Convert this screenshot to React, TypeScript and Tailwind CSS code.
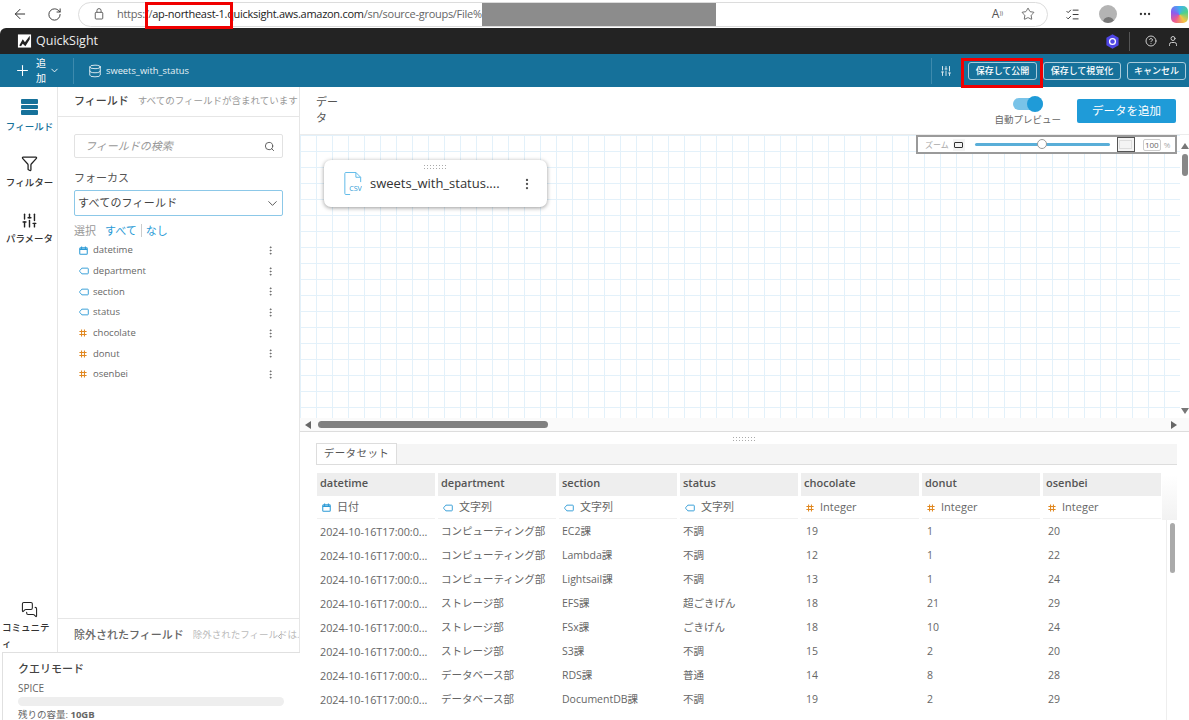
import { ArrowLeft, RotateCw, Plus, ChevronDown, ChevronLeft, Search, EllipsisVertical, SlidersVertical, CircleHelp, User, Ellipsis, Star, ListChecks, Filter, MessagesSquare, Database } from "lucide-react";

const JP = "font-['Open_Sans','Noto_Sans_CJK_JP',sans-serif]";

function CalIcon({ className = "" }: { className?: string }) {
  return (
    <svg viewBox="0 0 12 12" className={"w-[9px] h-[9px] text-[#2e9bd6] " + className} fill="none" stroke="currentColor" strokeWidth="1.4">
      <rect x="1" y="2.5" width="10" height="8.5" rx="1" />
      <path d="M3.5 0.5v3M8.5 0.5v3M1 4.5h10" />
    </svg>
  );
}
function TagIcon({ className = "" }: { className?: string }) {
  return (
    <svg viewBox="0 0 14 10" className={"w-[10px] h-[8px] text-[#2e9bd6] " + className} fill="none" stroke="currentColor" strokeWidth="1.3">
      <path d="M4 1h8a1 1 0 0 1 1 1v6a1 1 0 0 1-1 1H4L1 5.5V4.5z" />
    </svg>
  );
}
function HashIcon({ className = "" }: { className?: string }) {
  return (
    <svg viewBox="0 0 10 10" className={"w-[8px] h-[8px] text-[#e0871f] " + className} fill="none" stroke="currentColor" strokeWidth="1.3">
      <path d="M3.2 0.5v9M6.8 0.5v9M0.5 3.2h9M0.5 6.8h9" />
    </svg>
  );
}
function TypeIcon({ t }: { t: string }) {
  if (t === "date") return <CalIcon />;
  if (t === "str") return <TagIcon />;
  return <HashIcon />;
}

const fields: [string, string][] = [
  ["date", "datetime"],
  ["str", "department"],
  ["str", "section"],
  ["str", "status"],
  ["num", "chocolate"],
  ["num", "donut"],
  ["num", "osenbei"],
];

const headers: [string, string, string][] = [
  ["datetime", "date", "日付"],
  ["department", "str", "文字列"],
  ["section", "str", "文字列"],
  ["status", "str", "文字列"],
  ["chocolate", "num", "Integer"],
  ["donut", "num", "Integer"],
  ["osenbei", "num", "Integer"],
];

const rows: string[][] = [
  ["コンピューティング部", "EC2課", "不調", "19", "1", "20"],
  ["コンピューティング部", "Lambda課", "不調", "12", "1", "22"],
  ["コンピューティング部", "Lightsail課", "不調", "13", "1", "24"],
  ["ストレージ部", "EFS課", "超ごきげん", "18", "21", "29"],
  ["ストレージ部", "FSx課", "ごきげん", "18", "10", "24"],
  ["ストレージ部", "S3課", "不調", "15", "2", "20"],
  ["データベース部", "RDS課", "普通", "14", "8", "28"],
  ["データベース部", "DocumentDB課", "不調", "19", "2", "29"],
];

function Browser() {
  return (
    <div className="h-[28px] bg-white flex items-center shrink-0 text-[#555]">
      <div className="w-[40px] flex justify-center"><ArrowLeft size={16} strokeWidth={1.5} className="text-[#333]" /></div>
      <div className="w-[32px] flex justify-center"><RotateCw size={15} strokeWidth={1.5} className="text-[#333] ml-[-4px]" /></div>
      <div className="w-[970px] h-[25px] ml-[6px] border border-[#dcdcdc] rounded-full flex items-center relative overflow-hidden">
        <svg viewBox="0 0 12 14" className="w-[10px] h-[12px] ml-[15px] text-[#555]" fill="none" stroke="currentColor" strokeWidth="1.1"><rect x="1.5" y="5" width="9" height="8" rx="1" /><path d="M3.5 5V3a2.500 2.500 0 0 1 5 0v2" /></svg>
        <span className="ml-[13px] text-[11px] text-[#666] font-['Open_Sans',sans-serif] whitespace-nowrap tracking-[-0.28px]">
          https://<span className="text-[#222]">ap-northeast-1.quicksight.aws.amazon.com</span>/sn/source-groups/File%
        </span>
        <div className="w-[234px] h-[23px] bg-[#8c8c8c]" />
        <div className="ml-auto mr-[12px] flex items-center gap-[18px]">
          <span className="text-[12px] text-[#555] font-['Open_Sans',sans-serif]">A<sup className="text-[6px]">))</sup></span>
          <Star size={14} strokeWidth={1.3} className="text-[#444]" />
        </div>
      </div>
      <ListChecks size={15} strokeWidth={1.4} className="ml-[17px] text-[#222]" />
      <div className="w-[18px] h-[18px] rounded-full bg-[#b4b4b4] ml-[19px] flex items-end justify-center overflow-hidden"><div className="w-[11px] h-[6px] rounded-t-full bg-[#777]" /></div>
      <Ellipsis size={14} className="ml-[21px] text-[#333]" />
      <div className="w-[17px] h-[17px] ml-[19px] rounded-[5px] bg-[conic-gradient(#3fb0f0,#4fd18b,#f5c542,#ee5a8f,#8a5cf0,#3fb0f0)]" />
    </div>
  );
}

function TopBars() {
  return (
    <>
      <div className="h-[26px] bg-[#232323] rounded-tl-[6px] flex items-center text-white shrink-0">
        <svg viewBox="0 0 16 16" className="w-[15px] h-[14px] ml-[17px] mr-[4px]"><rect x="0.5" y="0.5" width="15" height="15" fill="#fff" /><path d="M2 13l4-7 2.500 3.500L14 2v4l-5 8-3-3-2 3z" fill="#232323" /></svg>
        <span className={"text-[12.5px] text-[#eee] " + JP}>QuickSight</span>
        <div className="ml-auto flex items-center">
          <svg viewBox="0 0 16 18" className="w-[13px] h-[15px]"><path d="M8 0l7.500 4.500v9L8 18 .5 13.500v-9z" fill="#4f46e5" /><circle cx="8" cy="9" r="3.600" fill="none" stroke="#fff" strokeWidth="1.600" /></svg>
          <div className="w-px h-[19px] bg-[#555] ml-[10px] mr-[15px]" />
          <CircleHelp size={12} className="text-[#ccc]" />
          <User size={12} className="text-[#ccc] ml-[10px] mr-[10px]" />
        </div>
      </div>
      <div className={"h-[33px] bg-[#16719a] flex items-center text-white shrink-0 " + JP}>
        <Plus size={17} strokeWidth={1.5} className="ml-[14px]" />
        <div className="w-[12px] ml-[4px] text-[10px] leading-[15px] text-center">追加</div>
        <ChevronDown size={11} className="ml-[2px]" />
        <div className="w-px h-[26px] bg-[#3d8aad] ml-[13px]" />
        <Database size={14} strokeWidth={1.4} className="ml-[14px]" />
        <span className="ml-[4px] text-[9.300px] font-medium text-[#e8f2f6]">sweets_with_status</span>
        <div className="ml-auto flex items-center">
          <div className="w-px h-[26px] bg-[#3d8aad]" />
          <SlidersVertical size={12} className="ml-[8px] text-[#d5e5ec]" />
          <button className="ml-[16px] h-[18px] w-[69px] border border-[#a9cbdb] rounded-[3px] text-[9px] font-medium">保存して公開</button>
          <button className="ml-[6px] h-[18px] w-[78px] border border-[#a9cbdb] rounded-[3px] text-[9px] font-medium">保存して視覚化</button>
          <button className="ml-[6px] mr-[3px] h-[18px] w-[59px] border border-[#a9cbdb] rounded-[3px] text-[9px] font-medium">キャンセル</button>
        </div>
      </div>
    </>
  );
}

function Rail() {
  return (
    <div className={"w-[58px] shrink-0 pl-[2px] flex flex-col items-center border-r border-[#e6e6e6] " + JP}>
      <div className="mt-[12px] flex flex-col gap-[1px]">
        <div className="w-[17px] h-[4.500px] bg-[#16719a] rounded-[1px]" />
        <div className="w-[17px] h-[4.500px] bg-[#16719a] rounded-[1px]" />
        <div className="w-[17px] h-[4.500px] bg-[#16719a] rounded-[1px]" />
      </div>
      <div className="mt-[5px] text-[9.500px] font-medium text-[#16719a] leading-[14px] whitespace-nowrap">フィールド</div>
      <Filter size={17} strokeWidth={1.8} className="mt-[21px] text-[#222]" />
      <div className="mt-[4px] text-[9.500px] font-medium text-[#333] leading-[14px] whitespace-nowrap">フィルター</div>
      <SlidersVertical size={17} strokeWidth={2} className="mt-[22px] text-[#222]" />
      <div className="mt-[3px] text-[9.500px] font-medium text-[#333] leading-[14px] whitespace-nowrap">パラメータ</div>
      <MessagesSquare size={17} strokeWidth={1.5} className="mt-auto text-[#222]" />
      <div className="mt-[2px] mb-[0px] ml-[-5px] w-[50px] text-[9.500px] font-medium text-[#333] leading-[16px]">コミュニティ</div>
    </div>
  );
}

function FieldPanel() {
  return (
    <div className={"w-[242px] shrink-0 flex flex-col border-r border-[#e6e6e6] " + JP}>
      <div className="h-[30px] shrink-0 border-b border-[#e6e6e6] pl-[16px] flex items-center whitespace-nowrap overflow-hidden">
        <span className="text-[11px] font-medium text-[#444]">フィールド</span>
        <span className="ml-[9px] text-[9.500px] text-[#999]">すべてのフィールドが含まれています</span>
      </div>
      <div className="flex-1 px-[16px] min-h-0">
        <div className="mt-[17px] h-[24px] border border-[#e2e2e2] rounded-[2px] flex items-center pl-[10px] pr-[7px]">
          <span className="text-[11px] italic text-[#999]">フィールドの検索</span>
          <Search size={11} className="ml-auto text-[#555]" />
        </div>
        <div className="mt-[12px] text-[11px] text-[#555] leading-[15px]">フォーカス</div>
        <div className="mt-[5px] h-[26px] border border-[#8cc8e8] rounded-[2px] flex items-center pl-[3px] pr-[2px]">
          <span className="text-[11px] tracking-[0.2px] text-[#444]">すべてのフィールド</span>
          <ChevronDown size={15} strokeWidth={1.4} className="ml-auto text-[#444]" />
        </div>
        <div className="mt-[7px] text-[11px] leading-[15px] flex items-center">
          <span className="text-[#999]">選択</span>
          <span className="ml-[9px] text-[#2a9ad6]">すべて</span>
          <span className="mx-[4px] w-px h-[13px] bg-[#ccc]" />
          <span className="text-[#2a9ad6]">なし</span>
        </div>
        <div className="mt-[2px]">
          {fields.map(([t, n]) => (
            <div key={n} className="h-[20.700px] flex items-center pl-[5px]">
              <span className="w-[14px] flex items-center"><TypeIcon t={t} /></span>
              <span className="text-[9.500px] text-[#666]">{n}</span>
              <EllipsisVertical size={11} className="ml-auto mr-[7px] text-[#666]" />
            </div>
          ))}
        </div>
      </div>
      <div className="relative h-[34px] shrink-0 border-t border-[#e6e6e6] pl-[16px] flex items-center whitespace-nowrap overflow-hidden">
        <span className="text-[11px] font-medium text-[#666]">除外されたフィールド</span>
        <span className="ml-[9px] text-[9.500px] text-[#bbb]">除外されたフィールドは.</span>
        <ChevronLeft size={9} className="absolute left-[217px] top-[13px] text-[#888]" />
      </div>
    </div>
  );
}

function Canvas() {
  return (
    <div className={"flex-1 min-h-0 flex flex-col " + JP}>
      <div className="h-[48px] shrink-0 flex items-start border-b border-[#ececec]">
        <div className="ml-[16px] mt-[7px] w-[24px] text-[11px] leading-[16px] text-[#555]">データ</div>
        <div className="ml-auto mt-[9px] flex flex-col items-center">
          <div className="relative w-[30px] h-[12px] rounded-full bg-[#79c3e8] mt-[2px]">
            <div className="absolute right-0 top-[-2px] w-[16px] h-[16px] rounded-full bg-[#1f9bd8]" />
          </div>
          <span className="mt-[3px] text-[9.500px] text-[#666] leading-[14px]">自動プレビュー</span>
        </div>
        <button className="ml-[16px] mr-[13px] mt-[12px] w-[99px] h-[24px] rounded-[2px] bg-[#1f9bd8] text-white text-[11.500px]">データを追加</button>
      </div>
      <div className="relative flex-1 min-h-0 bg-white bg-[linear-gradient(to_right,#e3f1fa_1px,transparent_1px),linear-gradient(to_bottom,#e3f1fa_1px,transparent_1px)] bg-[size:16px_16px]">
        <div className="absolute left-[24px] top-[25px] w-[223px] h-[47px] bg-white rounded-[7px] shadow-[0_1px_4px_rgba(0,0,0,0.4)] flex items-center">
          <div className="absolute top-[4px] left-[99px] w-[25px] h-[5px] bg-[radial-gradient(#aaa_1px,transparent_1px)] bg-[size:3px_3px]" />
          <svg viewBox="0 0 18 24" className="ml-[20px] w-[18px] h-[23px]" fill="none" stroke="#5bb8e8" strokeWidth="1"><path d="M12 .5H1.500a1 1 0 0 0-1 1v21a1 1 0 0 0 1 1H6M12 .5l5 5M12 .5v5h5v5" /><text x="5" y="20" fontSize="7.500" fill="#2e9bd6" stroke="none" fontFamily="Open Sans">CSV</text></svg>
          <span className="ml-[8px] text-[13px] text-[#333] whitespace-nowrap">sweets_with_status....</span>
          <EllipsisVertical size={14} className="ml-auto mr-[13px] text-[#555]" />
        </div>
        <div className="absolute right-[12px] top-[0px] w-[261px] h-[19px] bg-white border-2 border-[#9a9a9a] flex items-center">
          <span className="ml-[7px] text-[8px] text-[#aaa]">ズーム</span>
          <div className="ml-[4px] w-[12px] h-[12px] bg-[#f4f4f4] flex items-center justify-center"><div className="w-[9px] h-[6px] border border-[#333] rounded-[1px]" /></div>
          <div className="relative ml-[10px] w-[135px] h-[3px] rounded bg-[#59aed8]">
            <div className="absolute left-[62px] top-[-4px] w-[10px] h-[10px] rounded-full bg-white border border-[#999]" />
          </div>
          <div className="ml-[7px] w-[18px] h-[15px] border border-[#555] bg-[#f4f4f4] flex items-center justify-center"><div className="w-[13px] h-[9px] border border-[#ddd]" /></div>
          <div className="ml-[8px] w-[18px] h-[12px] border border-[#ccc] rounded-[2px] text-[8px] leading-[10px] text-center text-[#666]">100</div>
          <span className="ml-[3px] text-[8px] text-[#aaa]">%</span>
        </div>
        <div className="absolute right-0 top-0 bottom-0 w-[9px] bg-white flex flex-col items-center">
          <div className="mt-[8px] w-0 h-0 border-x-[4px] border-x-transparent border-b-[6px] border-b-[#777]" />
          <div className="mt-[5px] w-[6px] h-[22px] rounded bg-[#888]" />
          <div className="mt-auto mb-[17px] w-0 h-0 border-x-[4px] border-x-transparent border-t-[6px] border-t-[#777]" />
        </div>
        <div className="absolute left-0 right-0 bottom-0 h-[13px] bg-[#fafafa] flex items-center">
          <div className="ml-[5px] w-0 h-0 border-y-[4px] border-y-transparent border-r-[6px] border-r-[#666]" />
          <div className="ml-[7px] w-[230px] h-[7px] rounded bg-[#808080]" />
          <div className="ml-auto mr-[12px] w-0 h-0 border-y-[4px] border-y-transparent border-l-[6px] border-l-[#666]" />
        </div>
      </div>
    </div>
  );
}

function Preview() {
  return (
    <div className={"h-[289px] shrink-0 border-t border-[#ddd] flex flex-col overflow-hidden relative " + JP}>
      <div className="h-[12px] flex justify-center items-center">
        <div className="w-[25px] h-[5px] bg-[radial-gradient(#aaa_1px,transparent_1px)] bg-[size:3px_3px]" />
      </div>
      <div className="ml-[16px] mr-[12px] h-[21px] bg-[#f5f5f5] border-b border-[#ddd] flex items-end shrink-0">
        <div className="h-[21px] w-[81px] bg-white border border-b-0 border-[#ddd] text-[10.500px] text-[#555] flex items-center justify-center tracking-[0.4px]">データセット</div>
      </div>
      <div className="ml-[17px] mt-[8px] grid grid-cols-[repeat(7,118px)] gap-x-[3px] text-[10.500px]">
        {headers.map(([n]) => (
          <div key={n} className="h-[23px] bg-[#eeeeee] pl-[3px] pb-[2px] flex items-center text-[11px] font-semibold text-[#555]">{n}</div>
        ))}
        {headers.map(([n, t, l]) => (
          <div key={n} className="h-[22px] mt-[1px] mb-[1px] border-b border-[#f0f0f0] pl-[5px] flex items-center text-[11px] text-[#666]">
            <TypeIcon t={t} />
            <span className="ml-[6px]">{l}</span>
          </div>
        ))}
        {rows.map((r, i) =>
          ["2024-10-16T17:00:0...", ...r].map((c, j) => (
            <div key={i + "-" + j} className={"h-[24px] flex items-center text-[#666] whitespace-nowrap " + (j === 0 ? "text-[10.800px] " : "") + (j > 3 ? "pl-[5px]" : "pl-[3px]")}>{c}</div>
          ))
        )}
      </div>
      <div className="absolute right-[12px] top-[43px] w-[15px] h-[45px] bg-gradient-to-b from-white to-[#f2f2f2]" />
      <div className="absolute right-[12px] top-[88px] bottom-0 w-[11px] border-l border-[#eee] flex justify-center">
        <div className="mt-[3px] w-[5px] h-[50px] rounded bg-[#aaa]" />
      </div>
    </div>
  );
}

export default function App() {
  return (
    <div className="relative w-[1189px] h-[720px] overflow-hidden bg-white flex flex-col">
      <Browser />
      <TopBars />
      <div className="flex-1 min-h-0 flex">
        <div className="w-[300px] shrink-0 flex flex-col">
          <div className="flex-1 min-h-0 flex">
            <Rail />
            <FieldPanel />
          </div>
          <div className={"h-[68px] shrink-0 ml-[2px] border-t border-l border-[#e0e0e0] pl-[15px] pr-[16px] pt-[8px] " + JP}>
            <div className="text-[11px] font-medium text-[#444] leading-[16px]">クエリモード</div>
            <div className="mt-[4px] text-[10px] text-[#666] leading-[14px]">SPICE</div>
            <div className="mt-[2px] h-[9px] rounded-full bg-[#eeeeee]" />
            <div className="mt-[2px] text-[9.500px] text-[#666] leading-[13px]">残りの容量: <b>10GB</b></div>
          </div>
        </div>
        <div className="flex-1 min-w-0 flex flex-col">
          <Canvas />
          <Preview />
        </div>
      </div>
      {/* annotation overlays */}
      <div className="absolute left-[145px] top-[2px] w-[88px] h-[27px] border-[3px] border-[#f00000]" />
      <div className="absolute left-[961px] top-[58px] w-[82px] h-[30px] border-[3px] border-[#f00000]" />
    </div>
  );
}
